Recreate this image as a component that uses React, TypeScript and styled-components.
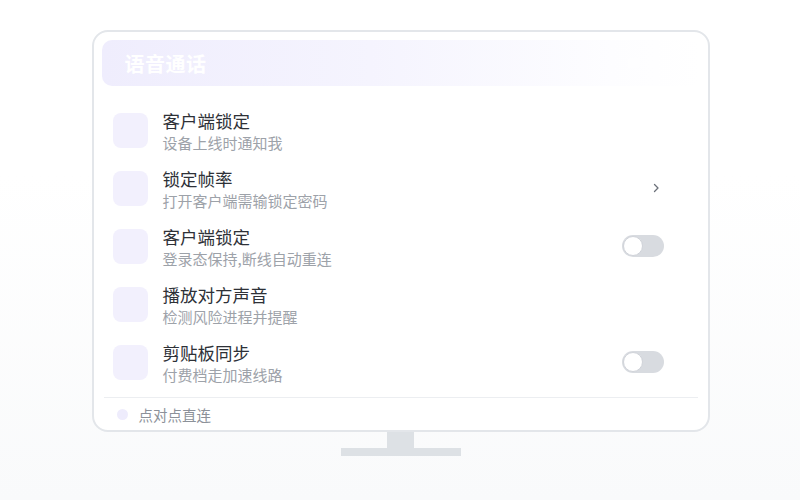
import React from "react";
import styled, { createGlobalStyle } from "styled-components";

const Global = createGlobalStyle`
  html, body { margin: 0; padding: 0; }
  body {
    width: 800px;
    height: 500px;
    overflow: hidden;
    background: linear-gradient(180deg, #ffffff 0%, #ffffff 35%, #f9fafb 100%);
    font-family: "Noto Sans CJK SC", "Noto Sans", sans-serif;
  }
`;

const Stage = styled.div`
  width: 800px;
  height: 500px;
  display: flex;
  flex-direction: column;
  align-items: center;
  padding-top: 30px;
  box-sizing: border-box;
`;

const Screen = styled.div`
  width: 618px;
  height: 402px;
  box-sizing: border-box;
  border: 2px solid #e3e6ea;
  border-radius: 16px;
  background: #ffffff;
  padding: 8px 8px 0;
  display: flex;
  flex-direction: column;
  margin-left: 1px;
`;

const Header = styled.div`
  height: 46px;
  flex: none;
  border-radius: 10px;
  background: linear-gradient(90deg, #efedfd 0%, #f5f4fe 45%, #fdfdff 85%, #ffffff 100%);
  display: flex;
  align-items: center;
  justify-content: space-between;
  padding: 0 22px 0 23px;
`;

const HeaderTitle = styled.div`
  color: #ffffff;
  font-size: 20px;
  font-weight: 700;
  letter-spacing: 0.5px;
`;

const HeaderTools = styled.div`
  display: flex;
  align-items: center;
  gap: 8px;
  opacity: 0.9;
`;

const List = styled.div`
  display: flex;
  flex-direction: column;
  padding-top: 15px;
`;

const Row = styled.div`
  height: 58px;
  display: flex;
  align-items: center;
  padding: 0 36px 0 11px;
`;

const IconBox = styled.div`
  width: 35px;
  height: 35px;
  border-radius: 8px;
  background: #f2f0fd;
  flex: none;
`;

const Texts = styled.div`
  flex: 1;
  display: flex;
  flex-direction: column;
  margin-left: 15px;
  gap: 1px;
  padding-top: 2px;
`;

const Title = styled.div`
  font-size: 17.5px;
  line-height: 22px;
  color: #2e3137;
`;

const Sub = styled.div`
  font-size: 15px;
  line-height: 20px;
  color: #9da2a9;
`;

const Chevron = styled.div`
  width: 16px;
  display: flex;
  justify-content: center;
  color: #6b7079;
`;

const Switch = styled.div`
  width: 42px;
  height: 22px;
  border-radius: 11px;
  background: #d8dbe0;
  display: flex;
  align-items: center;
  padding: 1px;
  box-sizing: border-box;
`;

const Knob = styled.div`
  width: 20px;
  height: 20px;
  border-radius: 50%;
  background: #ffffff;
  box-sizing: border-box;
  border: 1px solid #d0d3d9;
`;

const Footer = styled.div`
  margin: auto 2px 0;
  border-top: 1px solid #eceef1;
  height: 33px;
  display: flex;
  align-items: center;
  padding: 0 0 0 13px;
  box-sizing: border-box;
  gap: 11px;
`;

const Dot = styled.div`
  width: 11px;
  height: 11px;
  border-radius: 50%;
  background: #eeecfc;
`;

const FooterText = styled.div`
  font-size: 14.5px;
  color: #8c9199;
`;

const Neck = styled.div`
  width: 27px;
  height: 16px;
  background: #dde1e5;
  margin-left: 1px;
`;

const Base = styled.div`
  width: 120px;
  height: 8px;
  background: #dde1e5;
  margin-left: 1px;
`;

type Trail = "none" | "chevron" | "switch";

const items: { title: string; sub: string; trail: Trail }[] = [
  { title: "客户端锁定", sub: "设备上线时通知我", trail: "none" },
  { title: "锁定帧率", sub: "打开客户端需输锁定密码", trail: "chevron" },
  { title: "客户端锁定", sub: "登录态保持,断线自动重连", trail: "switch" },
  { title: "播放对方声音", sub: "检测风险进程并提醒", trail: "none" },
  { title: "剪贴板同步", sub: "付费档走加速线路", trail: "switch" },
];

function Trailing({ kind }: { kind: Trail }) {
  if (kind === "chevron")
    return (
      <Chevron>
        <svg width="8" height="12" viewBox="0 0 8 12" fill="none">
          <path d="M2.5 2.5 L6 6 L2.5 9.5" stroke="currentColor" strokeWidth="1.3" strokeLinecap="round" strokeLinejoin="round" />
        </svg>
      </Chevron>
    );
  if (kind === "switch")
    return (
      <Switch>
        <Knob />
      </Switch>
    );
  return null;
}

export default function App() {
  return (
    <>
      <Global />
      <Stage>
        <Screen>
          <Header>
            <HeaderTitle>语音通话</HeaderTitle>
            <HeaderTools>
              <svg width="12" height="10" viewBox="0 0 12 10"><rect x="0" y="0" width="12" height="10" rx="2" fill="#ffffff" /></svg>
              <svg width="10" height="10" viewBox="0 0 10 10"><path d="M2 1 L8 5 L2 9 Z" fill="#ffffff" /></svg>
              <svg width="12" height="10" viewBox="0 0 12 10"><rect x="0" y="0" width="12" height="10" rx="2" fill="#ffffff" /></svg>
            </HeaderTools>
          </Header>
          <List>
            {items.map((it, i) => (
              <Row key={i}>
                <IconBox />
                <Texts>
                  <Title>{it.title}</Title>
                  <Sub>{it.sub}</Sub>
                </Texts>
                <Trailing kind={it.trail} />
              </Row>
            ))}
          </List>
          <Footer>
            <Dot />
            <FooterText>点对点直连</FooterText>
          </Footer>
        </Screen>
        <Neck />
        <Base />
      </Stage>
    </>
  );
}
